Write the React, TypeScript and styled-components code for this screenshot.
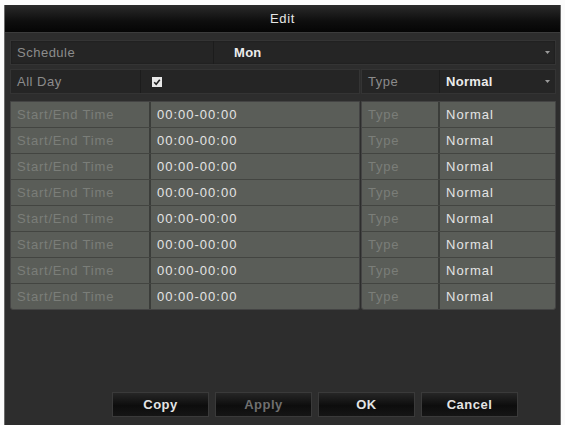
import React from 'react';
import styled, { createGlobalStyle } from 'styled-components';

const GlobalStyle = createGlobalStyle`
    html, body {
        margin: 0;
        padding: 0;
        background: #fbfbfb;
        font-family: 'Liberation Sans', Arial, sans-serif;
    }
`;

const rows = Array.from({ length: 8 }, () => ({ time: '00:00-00:00', type: 'Normal' }));

const Arrow = () => (
    <svg width="7" height="5" viewBox="0 0 7 5">
        <path d="M1 1 L3.5 4 L6 1 Z" fill="#9a9a9a" />
    </svg>
);

const App: React.FC = () => {
    return (
        <>
            <GlobalStyle />
            <Page>
                <Dialog>
                    <TitleBar>Edit</TitleBar>
                    <Body>
                        <SelectRow>
                            <LabelCell width={203}>Schedule</LabelCell>
                            <ValueCell $bold $indent={20}>Mon</ValueCell>
                            <ArrowCell>
                                <Arrow />
                            </ArrowCell>
                        </SelectRow>

                        <SplitRow>
                            <HeadBox width={348}>
                                <LabelCell width={130}>All Day</LabelCell>
                                <ValueCell $indent={11}>
                                    <Check>
                                        <svg width="8" height="8" viewBox="0 0 8 8">
                                            <path d="M1.2 4.2 L3.2 6.2 L6.8 1.8" stroke="#222" strokeWidth="1.6" fill="none" />
                                        </svg>
                                    </Check>
                                </ValueCell>
                            </HeadBox>
                            <HeadBox width={193}>
                                <LabelCell width={78}>Type</LabelCell>
                                <ValueCell $bold $indent={6}>Normal</ValueCell>
                                <ArrowCell>
                                    <Arrow />
                                </ArrowCell>
                            </HeadBox>
                        </SplitRow>

                        <Tables>
                            <Table width={348}>
                                {rows.map((r, i) => (
                                    <TableRow key={i} $last={i === rows.length - 1}>
                                        <DimCell width={140}>Start/End Time</DimCell>
                                        <DataCell>{r.time}</DataCell>
                                    </TableRow>
                                ))}
                            </Table>
                            <Table width={193}>
                                {rows.map((r, i) => (
                                    <TableRow key={i} $last={i === rows.length - 1}>
                                        <DimCell width={78}>Type</DimCell>
                                        <DataCell>{r.type}</DataCell>
                                    </TableRow>
                                ))}
                            </Table>
                        </Tables>

                        <Footer>
                            <Button>Copy</Button>
                            <Button $disabled>Apply</Button>
                            <Button>OK</Button>
                            <Button>Cancel</Button>
                        </Footer>
                    </Body>
                </Dialog>
            </Page>
        </>
    );
};
export default App;

const Page = styled.div`
    width: 565px;
    height: 425px;
    padding: 5px 4px 0 4px;
    box-sizing: border-box;
    overflow: hidden;
`;

const Dialog = styled.div`
    height: 430px;
    display: flex;
    flex-direction: column;
    background: #2d2d2d;
    border-left: 1px solid #6a6a6a;
    border-right: 1px solid #6a6a6a;
`;

const TitleBar = styled.div`
    height: 27px;
    flex-shrink: 0;
    display: flex;
    align-items: center;
    justify-content: center;
    background: linear-gradient(#2a2a2a, #0e0e0e 60%, #050505);
    border-bottom: 1px solid #3c3c3c;
    color: #e6e6e6;
    font-size: 13px;
    letter-spacing: 0.6px;
`;

const Body = styled.div`
    flex: 1;
    display: flex;
    flex-direction: column;
    padding: 7px 4px 0 5px;
`;

const SelectRow = styled.div`
    height: 23px;
    display: flex;
    background: #252525;
    border: 1px solid #343434;
    box-shadow: inset 0 0 2px #1a1a1a;
`;

const SplitRow = styled.div`
    display: flex;
    justify-content: space-between;
    margin-top: 4px;
`;

const HeadBox = styled.div<{ width: number }>`
    width: ${(p) => p.width}px;
    height: 23px;
    display: flex;
    background: #252525;
    border: 1px solid #343434;
`;

const LabelCell = styled.div<{ width: number }>`
    width: ${(p) => p.width}px;
    flex-shrink: 0;
    display: flex;
    align-items: center;
    padding-left: 6px;
    box-sizing: border-box;
    border-right: 1px solid #1c1c1c;
    color: #8c8c8c;
    font-size: 13px;
    letter-spacing: 0.5px;
`;

const ValueCell = styled.div<{ $bold?: boolean; $indent: number }>`
    flex: 1;
    display: flex;
    align-items: center;
    padding-left: ${(p) => p.$indent}px;
    color: #ececec;
    font-size: 13px;
    font-weight: ${(p) => (p.$bold ? 700 : 400)};
    letter-spacing: 0.3px;
`;

const ArrowCell = styled.div`
    width: 16px;
    display: flex;
    align-items: center;
    justify-content: center;
`;

const Check = styled.div`
    width: 10px;
    height: 10px;
    background: #e8e8e8;
    display: flex;
    align-items: center;
    justify-content: center;
`;

const Tables = styled.div`
    display: flex;
    justify-content: space-between;
    margin-top: 7px;
`;

const Table = styled.div<{ width: number }>`
    width: ${(p) => p.width}px;
    display: flex;
    flex-direction: column;
    background: #5a5d58;
    border: 1px solid #444;
    border-radius: 0 0 3px 3px;
`;

const TableRow = styled.div<{ $last?: boolean }>`
    height: 25px;
    display: flex;
    border-bottom: ${(p) => (p.$last ? 'none' : '1px solid #434541')};
`;

const DimCell = styled.div<{ width: number }>`
    width: ${(p) => p.width}px;
    flex-shrink: 0;
    display: flex;
    align-items: center;
    padding-left: 6px;
    box-sizing: border-box;
    border-right: 2px solid #3b3d3a;
    color: #7b7e79;
    font-size: 13px;
    letter-spacing: 0.8px;
`;

const DataCell = styled.div`
    flex: 1;
    display: flex;
    align-items: center;
    padding-left: 6px;
    color: #e4e4e4;
    font-size: 13px;
    letter-spacing: 1px;
`;

const Footer = styled.div`
    margin-top: auto;
    margin-bottom: 18px;
    display: flex;
    gap: 6px;
    padding-left: 102px;
`;

const Button = styled.div<{ $disabled?: boolean }>`
    width: 97px;
    height: 25px;
    display: flex;
    align-items: center;
    justify-content: center;
    background: linear-gradient(#262626, #0d0d0d 55%, #151515);
    border: 1px solid #3a3a3a;
    box-sizing: border-box;
    color: ${(p) => (p.$disabled ? '#6f6f6f' : '#e4e4e4')};
    font-size: 13px;
    font-weight: 700;
    letter-spacing: 0.5px;
    cursor: pointer;
`;
